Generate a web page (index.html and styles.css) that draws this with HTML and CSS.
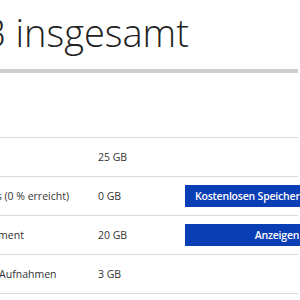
FILE: index.html
```html
<!DOCTYPE html>
<html lang="de">
<head>
  <meta charset="UTF-8">
  <meta name="viewport" content="width=device-width, initial-scale=1.0">
  <title>Speicher</title>
  <link rel="stylesheet" href="styles.css">
</head>
<body>

  <div class="seite">
    <h1 class="gesamt">48 GB insgesamt</h1>
    <div class="balken"></div>

    <div class="tabelle">
      <div class="zeile">
        <div class="name">Kostenlos</div>
        <div class="wert">25 GB</div>
        <div class="aktion"></div>
      </div>
      <div class="zeile">
        <div class="name">Empfehlungsbonus (0 % erreicht)</div>
        <div class="wert">0 GB</div>
        <div class="aktion"><button class="links">Kostenlosen Speicherplatz erhalten</button></div>
      </div>
      <div class="zeile">
        <div class="name">Office 365-Abonnement</div>
        <div class="wert">20 GB</div>
        <div class="aktion"><button>Anzeigen</button></div>
      </div>
      <div class="zeile">
        <div class="name">Bonus für Kamera-Aufnahmen</div>
        <div class="wert">3 GB</div>
        <div class="aktion"></div>
      </div>
    </div>
  </div>

</body>
</html>
```

FILE: styles.css
```css
body {
  margin: 0;
  background: #fff;
  color: #333;
  font-family: "Open Sans", Arial, sans-serif;
  overflow: hidden;
}
.seite {
  width: 298px;
}
.gesamt {
  margin: 0 0 0 -99px;
  padding-top: 9px;
  height: 60px;
  box-sizing: border-box;
  font-size: 38px;
  font-weight: 300;
  line-height: 46px;
  color: #222;
  white-space: nowrap;
}
.balken {
  height: 4px;
  margin-top: 9px;
  background: #cfcfcf;
}
.tabelle {
  margin-top: 64px;
  border-bottom: 1px solid #dadada;
}
.zeile {
  display: flex;
  align-items: center;
  height: 38px;
  border-top: 1px solid #dadada;
  font-size: 10.5px;
  white-space: nowrap;
}
.name {
  flex: none;
  width: 191px;
  margin-left: -93px;
}
.wert {
  flex: none;
  width: 87px;
}
.aktion {
  flex: none;
}
button {
  width: 184px;
  height: 22px;
  padding: 0 10px;
  border: none;
  background: #0a3eb4;
  color: #fff;
  font-family: "Open Sans", Arial, sans-serif;
  font-size: 10.5px;
  font-weight: 600;
  letter-spacing: -0.2px;
  white-space: nowrap;
  overflow: hidden;
  text-align: center;
}
button.links {
  text-align: left;
}
```
